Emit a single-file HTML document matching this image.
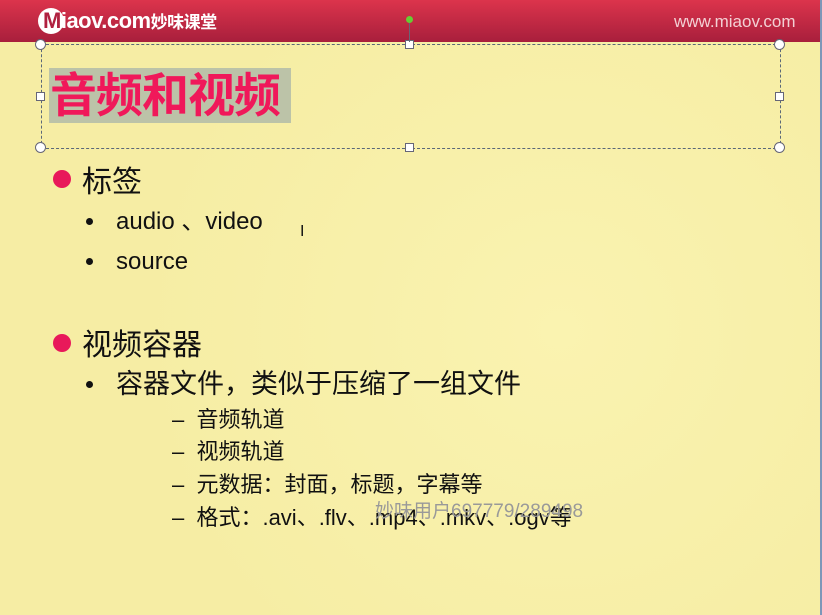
<html><head><style>
body{margin:0;width:822px;height:615px;overflow:hidden;background:#f7eea6;font-family:"Liberation Sans","Noto Sans CJK SC",sans-serif;position:relative}
.hd{position:absolute;left:0;top:0;width:822px;height:42px;background:linear-gradient(#dc344c,#a81f3c)}
.a{position:absolute;white-space:nowrap;color:#111}
.dot{position:absolute;width:18px;height:18px;border-radius:50%;background:#e8195a}
.h{position:absolute;width:7px;height:7px;background:#fff;border:1px solid #667}
.c{position:absolute;width:9px;height:9px;border-radius:50%;background:#fff;border:1px solid #667}
.s{position:absolute;left:172px;font-size:22px;line-height:26px;white-space:nowrap;color:#111}
.b{position:absolute;left:86px;width:7px;height:7px;border-radius:50%;background:#111}
</style></head><body>
<div style="position:absolute;inset:0;background:radial-gradient(circle at 560px 330px,#faf3b0 0,#f6eda4 420px)"></div>
<div class="hd"></div>
<div style="position:absolute;left:38px;top:8px;width:26px;height:26px;border-radius:50%;background:#fff"></div>
<div class="a" style="left:43px;top:8px;color:#fff;font-weight:bold;font-size:22px;letter-spacing:-0.5px"><span style="color:#b02040">M</span>iaov.com<span style="font-size:17px">妙味课堂</span></div>
<div class="a" style="left:674px;top:12px;color:#f3d0d4;font-size:17px">www.miaov.com</div>
<div style="position:absolute;right:0;top:0;width:2px;height:615px;background:#7d97b8"></div>
<div style="position:absolute;left:41px;top:44px;width:738px;height:103px;border:1px dashed #5a6878"></div>
<div class="c" style="left:35px;top:39px"></div><div class="c" style="left:774px;top:39px"></div>
<div class="c" style="left:35px;top:142px"></div><div class="c" style="left:774px;top:142px"></div>
<div class="h" style="left:405px;top:40px"></div><div class="h" style="left:405px;top:143px"></div>
<div class="h" style="left:36px;top:92px"></div><div class="h" style="left:775px;top:92px"></div>
<div style="position:absolute;left:409px;top:16px;width:1px;height:26px;background:#667"></div>
<div style="position:absolute;left:406px;top:16px;width:7px;height:7px;border-radius:50%;background:#6c3"></div>
<div style="position:absolute;left:49px;top:68px;width:242px;height:55px;background:#bcc3a8"></div>
<div class="a" style="left:50px;top:70px;font-size:47px;font-weight:bold;color:#f0185a;line-height:52px;letter-spacing:-1px">音频和视频</div>
<div class="dot" style="left:53px;top:170px"></div>
<div class="a" style="left:82px;top:157px;font-size:30px">标签</div>
<div class="b" style="top:218px"></div>
<div class="a" style="left:116px;top:207px;font-size:24px;line-height:30px">audio 、video</div>
<div class="b" style="top:258px"></div>
<div class="a" style="left:116px;top:247px;font-size:24px;line-height:30px">source</div>
<div class="a" style="left:300px;top:223px;font-size:16px">I</div>
<div class="dot" style="left:53px;top:334px"></div>
<div class="a" style="left:82px;top:320px;font-size:30px">视频容器</div>
<div class="b" style="top:381px"></div>
<div class="a" style="left:116px;top:368px;font-size:27px;line-height:32px">容器文件，类似于压缩了一组文件</div>
<div class="s" style="top:407px">–&nbsp; 音频轨道</div>
<div class="s" style="top:439px">–&nbsp; 视频轨道</div>
<div class="s" style="top:472px">–&nbsp; 元数据：封面，标题，字幕等</div>
<div class="s" style="top:505px">–&nbsp; 格式：.avi、.flv、.mp4、.mkv、.ogv等</div>
<div class="a" style="left:375px;top:496px;font-size:19px;color:#999">妙味用户697779/289498</div>
</body></html>
